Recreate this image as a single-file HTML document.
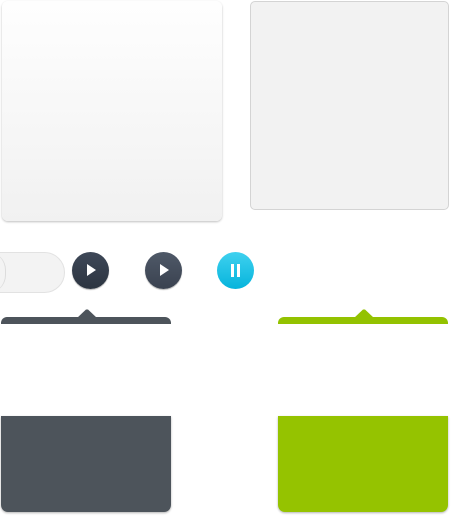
<!DOCTYPE html>
<html><head><meta charset="utf-8"><style>
html,body{margin:0;padding:0;background:#fff;width:451px;height:516px;overflow:hidden;position:relative}
div{position:absolute;box-sizing:border-box}
.p1{left:2px;top:1px;width:220px;height:220px;border-radius:6px;background:linear-gradient(#fefefe,#f1f1f1);box-shadow:0 1px 2px rgba(0,0,0,.25)}
.p2{left:250px;top:1px;width:199px;height:209px;border-radius:5px;background:#f2f2f2;border:1px solid #d4d4d4}
.tog{left:-20px;top:252px;width:85px;height:41px;border-radius:21px;background:#f3f3f3;border:1px solid #e2e2e2}
.tog2{left:-30px;top:252px;width:36px;height:41px;border-radius:21px;border-right:1px solid #dcdcdc}
.c{top:252px;width:37px;height:37px;border-radius:50%}
.d1{left:72px;background:linear-gradient(#3e4858,#2c3440);box-shadow:0 1px 1px rgba(0,0,0,.3)}
.d2{left:145px;background:linear-gradient(#4f5968,#3a4250);box-shadow:0 1px 1px rgba(0,0,0,.3)}
.b{left:217px;background:linear-gradient(#3fd1ef,#06b4dc)}
.tri{left:15px;top:12px;width:0;height:0;border-left:9px solid #fff;border-top:6px solid transparent;border-bottom:6px solid transparent}
.bar{top:12px;width:3px;height:13px;background:#fff}
.strip{top:317px;width:170px;height:7px;border-radius:6px 6px 0 0}
.arr{top:309px;width:20px;height:9px;clip-path:polygon(0 100%,45% 5%,55% 5%,100% 100%)}
.blk{top:416px;width:170px;height:96px;border-radius:0 0 7px 7px;box-shadow:0 1px 2px rgba(0,0,0,.3)}
</style></head><body>
<div class="p1"></div>
<div class="p2"></div>
<div class="tog"></div>
<div class="tog2"></div>
<div class="c d1"><div class="tri"></div></div>
<div class="c d2"><div class="tri"></div></div>
<div class="c b"><div class="bar" style="left:14px"></div><div class="bar" style="left:20px"></div></div>
<div class="arr" style="left:77px;background:#4d545b"></div>
<div class="strip" style="left:1px;background:#4d545b"></div>
<div class="blk" style="left:1px;background:#4d545b"></div>
<div class="arr" style="left:354px;background:#93c200"></div>
<div class="strip" style="left:278px;background:#93c200"></div>
<div class="blk" style="left:278px;background:#95c300"></div>
</body></html>
